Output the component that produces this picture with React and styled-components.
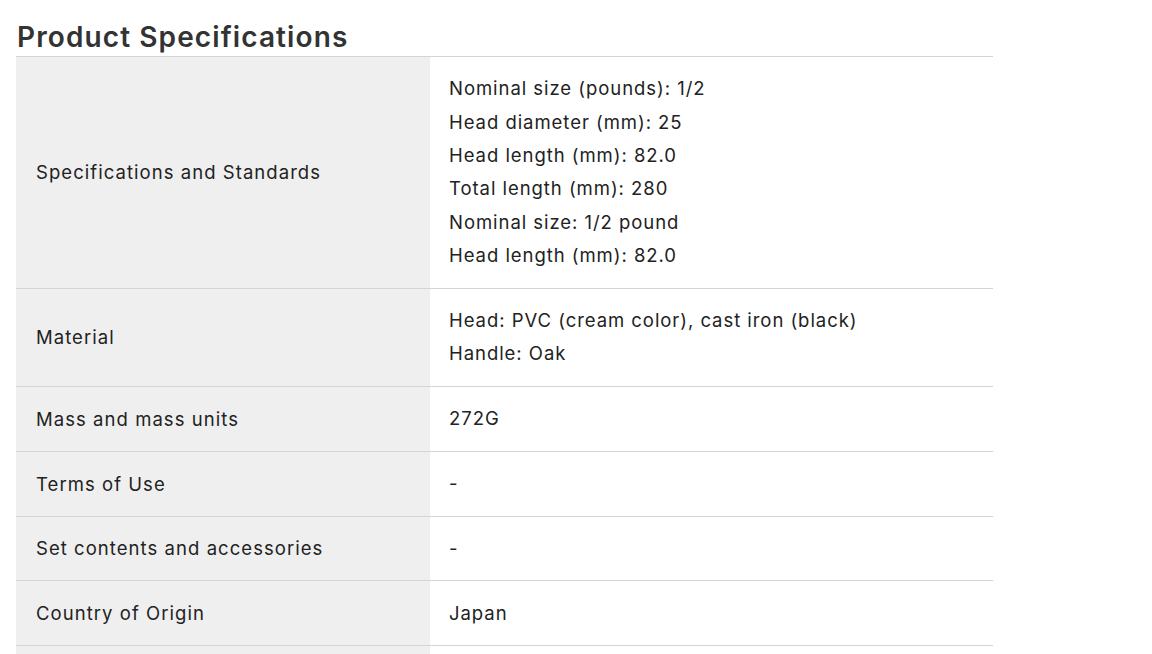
import styled, { createGlobalStyle } from 'styled-components';

const GlobalStyle = createGlobalStyle`
  html, body {
    margin: 0;
    padding: 0;
    background: #ffffff;
  }
  body {
    font-family: Inter, "Noto Sans", "Liberation Sans", sans-serif;
    color: #222222;
  }
`;

const Section = styled.section`
  width: 977px;
  padding: 18px 0 0 16px;
`;

const Title = styled.h2`
  margin: 0 0 0 1px;
  font-size: 28px;
  font-weight: 600;
  line-height: 38px;
  color: #333333;
  letter-spacing: 1.1px;
`;

const Table = styled.div`
  border-top: 1px solid #d4d4d4;
`;

const Row = styled.div`
  display: grid;
  grid-template-columns: 414px 1fr;
  border-bottom: 1px solid #d4d4d4;
`;

const Label = styled.div`
  display: flex;
  align-items: center;
  background: #efefef;
  padding: 0 20px;
  font-size: 18.5px;
  letter-spacing: 1.05px;
`;

const Value = styled.div`
  padding: 15.2px 19px;
  font-size: 18.5px;
  line-height: 33.4px;
  letter-spacing: 0.95px;
`;

const Line = styled.div``;

const specs = [
  {
    label: 'Specifications and Standards',
    lines: [
      'Nominal size (pounds): 1/2',
      'Head diameter (mm): 25',
      'Head length (mm): 82.0',
      'Total length (mm): 280',
      'Nominal size: 1/2 pound',
      'Head length (mm): 82.0',
    ],
  },
  {
    label: 'Material',
    lines: ['Head: PVC (cream color), cast iron (black)', 'Handle: Oak'],
  },
  { label: 'Mass and mass units', lines: ['272G'] },
  { label: 'Terms of Use', lines: ['-'] },
  { label: 'Set contents and accessories', lines: ['-'] },
  { label: 'Country of Origin', lines: ['Japan'] },
  { label: '', lines: [''] },
];

export default function App() {
  return (
    <>
      <GlobalStyle />
      <Section>
        <Title>Product Specifications</Title>
        <Table>
          {specs.map((s, i) => (
            <Row key={i}>
              <Label>{s.label}</Label>
              <Value>
                {s.lines.map((l, j) => (
                  <Line key={j}>{l || '\u00a0'}</Line>
                ))}
              </Value>
            </Row>
          ))}
        </Table>
      </Section>
    </>
  );
}
